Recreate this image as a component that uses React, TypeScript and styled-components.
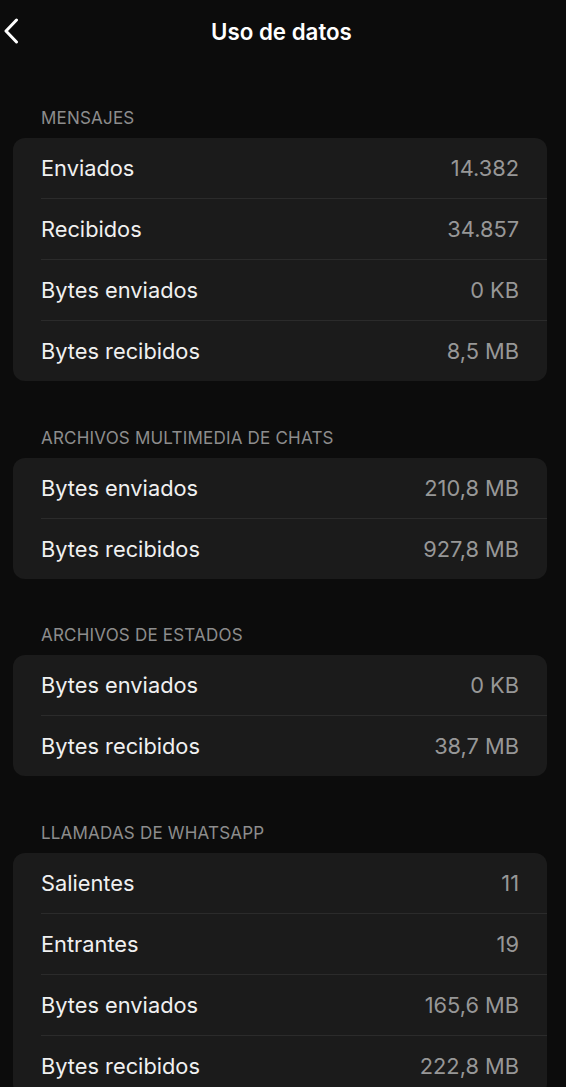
import React from "react";
import styled, { createGlobalStyle } from "styled-components";

type Row = { label: string; value: string };
type Group = { title: string; rows: Row[] };

const groups: Group[] = [
  {
    title: "MENSAJES",
    rows: [
      { label: "Enviados", value: "14.382" },
      { label: "Recibidos", value: "34.857" },
      { label: "Bytes enviados", value: "0 KB" },
      { label: "Bytes recibidos", value: "8,5 MB" },
    ],
  },
  {
    title: "ARCHIVOS MULTIMEDIA DE CHATS",
    rows: [
      { label: "Bytes enviados", value: "210,8 MB" },
      { label: "Bytes recibidos", value: "927,8 MB" },
    ],
  },
  {
    title: "ARCHIVOS DE ESTADOS",
    rows: [
      { label: "Bytes enviados", value: "0 KB" },
      { label: "Bytes recibidos", value: "38,7 MB" },
    ],
  },
  {
    title: "LLAMADAS DE WHATSAPP",
    rows: [
      { label: "Salientes", value: "11" },
      { label: "Entrantes", value: "19" },
      { label: "Bytes enviados", value: "165,6 MB" },
      { label: "Bytes recibidos", value: "222,8 MB" },
    ],
  },
];

export default function App() {
  return (
    <>
      <GlobalStyle />
      <Screen>
        <NavBar>
          <BackButton aria-label="Atrás">
            <svg width="16" height="26" viewBox="0 0 16 26" fill="none">
              <path d="M13.5 2L3 13l10.5 11" stroke="#fff" strokeWidth="3" strokeLinecap="round" strokeLinejoin="round" />
            </svg>
          </BackButton>
          <Title>Uso de datos</Title>
        </NavBar>
        <Content>
          {groups.map((group) => (
            <Section key={group.title}>
              <SectionTitle>{group.title}</SectionTitle>
              <Card>
                {group.rows.map((row) => (
                  <Item key={row.label}>
                    <Label>{row.label}</Label>
                    <Value>{row.value}</Value>
                  </Item>
                ))}
              </Card>
            </Section>
          ))}
        </Content>
      </Screen>
    </>
  );
}

const GlobalStyle = createGlobalStyle`
  html, body {
    margin: 0;
    padding: 0;
    background: #0c0c0c;
  }
  body {
    font-family: Inter, "Noto Sans", "Liberation Sans", sans-serif;
    color: #f2f2f2;
    -webkit-font-smoothing: antialiased;
  }
`;

const Screen = styled.div`
  width: 566px;
  min-height: 1087px;
  background: #0c0c0c;
  overflow: hidden;
`;

const NavBar = styled.header`
  position: relative;
  height: 62px;
  display: flex;
  align-items: center;
  justify-content: center;
`;

const BackButton = styled.button`
  position: absolute;
  left: 3px;
  top: 18px;
  padding: 0;
  border: none;
  background: none;
  display: flex;
  cursor: pointer;
`;

const Title = styled.h1`
  margin: 0 0 0 -3px;
  font-size: 22.3px;
  font-weight: 600;
  color: #ffffff;
`;

const Content = styled.main`
  display: flex;
  flex-direction: column;
  gap: 46.6px;
  padding: 46px 19px 0 13px;
`;

const Section = styled.section`
  display: flex;
  flex-direction: column;
  gap: 10px;
`;

const SectionTitle = styled.div`
  padding-left: 28px;
  font-size: 17px;
  line-height: 20px;
  color: #8d8d8d;
  letter-spacing: 0.2px;
`;

const Card = styled.div`
  background: #1b1b1b;
  border-radius: 12px;
  padding-left: 28px;
`;

const Item = styled.div`
  height: 60px;
  display: flex;
  align-items: center;
  justify-content: space-between;
  padding-right: 28px;
  &:not(:last-child) {
    border-bottom: 1px solid #2b2b2b;
  }
`;

const Label = styled.span`
  font-size: 21.8px;
  color: #f0f0f0;
`;

const Value = styled.span`
  font-size: 21.8px;
  color: #979797;
`;
